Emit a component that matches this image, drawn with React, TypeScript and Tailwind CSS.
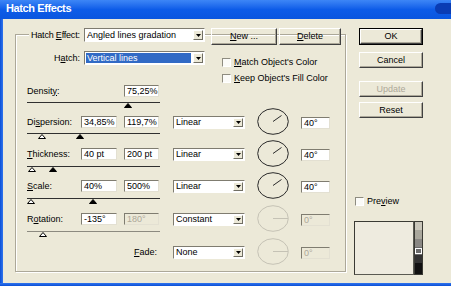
import React from 'react'

// ── small building blocks ──

function Key({ children }: { children: React.ReactNode }) {
  return <span className="underline decoration-1 underline-offset-[1px]">{children}</span>
}

function TextBox({
  value,
  className = '',
  disabled = false,
}: {
  value: string
  className?: string
  disabled?: boolean
}) {
  return (
    <div
      className={`flex h-[12px] shrink-0 items-center overflow-hidden border border-b-[#e3e0d2] border-l-[#7f7c70] border-r-[#e3e0d2] border-t-[#7f7c70] pl-[2px] text-[9px] leading-none ${
        disabled ? 'bg-[#ece9d8] text-[#aca899]' : 'bg-white text-black'
      } ${className}`}
    >
      {value}
    </div>
  )
}

function DropButton() {
  return (
    <div className="flex w-[10px] shrink-0 items-center justify-center border border-b-[#716f64] border-l-white border-r-[#716f64] border-t-white bg-[#ece9d8]">
      <svg width="5" height="3" viewBox="0 0 5 3">
        <polygon points="0,0 5,0 2.5,3" fill="#000" />
      </svg>
    </div>
  )
}

function Combo({
  value,
  className = '',
  selected = false,
}: {
  value: string
  className?: string
  selected?: boolean
}) {
  return (
    <div
      className={`flex shrink-0 items-stretch border border-b-white border-l-[#7f7c70] border-r-white border-t-[#7f7c70] bg-white p-[1px] text-[9px] leading-none ${className}`}
    >
      <div
        className={`mr-[2px] flex flex-1 items-center overflow-hidden whitespace-nowrap pl-[1px] ${
          selected ? 'bg-[#316ac5] text-white' : 'text-black'
        }`}
      >
        {value}
      </div>
      <DropButton />
    </div>
  )
}

function Button({
  children,
  className = '',
  disabled = false,
  isDefault = false,
}: {
  children: React.ReactNode
  className?: string
  disabled?: boolean
  isDefault?: boolean
}) {
  return (
    <div className={`shrink-0 ${isDefault ? 'border border-black' : ''} ${className}`}>
      <div
        className={`flex h-full w-full items-center justify-center border border-b-[#404040] border-l-white border-r-[#404040] border-t-white text-[9px] leading-none shadow-[inset_-1px_-1px_0_#aca899] ${
          disabled ? 'text-[#aca899]' : 'text-black'
        }`}
      >
        {children}
      </div>
    </div>
  )
}

function CheckBox() {
  return (
    <div className="h-[9px] w-[9px] shrink-0 border border-b-white border-l-[#8e8c80] border-r-white border-t-[#8e8c80] bg-[#fbfbf8]" />
  )
}

function Dial({ x2, y2, dim = false }: { x2: number; y2: number; dim?: boolean }) {
  const c = dim ? '#c5c2b5' : '#2a2a2a'
  return (
    <svg width="32" height="27" viewBox="0 0 32 27" className="-mb-[6px] -mt-[8px] shrink-0">
      <ellipse cx="16" cy="13.5" rx="15.3" ry="12.8" fill="none" stroke={c} strokeWidth="1" />
      <line x1="16" y1="13.5" x2={x2} y2={y2} stroke={c} strokeWidth="1" />
    </svg>
  )
}

type Thumb = { x: number; filled: boolean }

function Slider({ thumbs, dim = false, className = '' }: { thumbs: Thumb[]; dim?: boolean; className?: string }) {
  return (
    <div className={`relative h-[6px] w-[133px] ${className}`}>
      <div className={`h-px w-full ${dim ? 'bg-[#8c8a80]' : 'bg-[#303030]'}`} />
      {thumbs.map((t, i) => (
        <svg
          key={i}
          className="absolute top-[1px]"
          style={{ left: t.x - 4 }}
          width="8"
          height="5"
          viewBox="0 0 8 5"
        >
          <polygon
            points="0.5,4.5 4,0.5 7.5,4.5"
            fill={t.filled ? '#000' : '#fff'}
            stroke="#000"
            strokeWidth="1"
          />
        </svg>
      ))}
    </div>
  )
}

const SWATCHES = [
  { color: 'bg-[#c9c6ba]', h: 'h-[8px]', sel: false },
  { color: 'bg-[#a9a79c]', h: 'h-[9px]', sel: false },
  { color: 'bg-[#8a8884]', h: 'h-[8px]', sel: false },
  { color: 'bg-[#6b6b6b]', h: 'h-[8px]', sel: true },
  { color: 'bg-[#333333]', h: 'h-[8px]', sel: false },
  { color: 'bg-[#111111]', h: 'flex-1', sel: false },
]

export default function App() {
  return (
    <div className="flex h-[286px] w-[451px] flex-col overflow-hidden bg-[#ece9d8] font-['Liberation_Sans',Arial,sans-serif] text-black">
      {/* Title bar */}
      <div className="flex h-[19px] shrink-0 items-start bg-gradient-to-b from-[#3d86f6] via-[#0d5ce8] to-[#0a56df]">
        <span className="pl-[6px] pt-[3px] text-[11px] font-bold leading-none tracking-[-0.4px] text-white">
          Hatch Effects
        </span>
        <div className="ml-auto mt-[3px] h-[11px] w-[16px] rounded-l-full bg-[#0a3cb4]" />
      </div>

      <div className="flex flex-1">
        {/* left window frame */}
        <div className="w-[3px] shrink-0 bg-gradient-to-r from-[#0a4fd6] to-[#2f74ee]" />

        <div className="flex flex-1 items-start">
          {/* ── Group box ── */}
          <div className="ml-[12px] mt-[15px] h-[238px] w-[331px] shrink-0 border border-[#aca899] shadow-[inset_1px_1px_0_#fff,1px_1px_0_#fff]">
            <div className="flex flex-col pl-[11px]">
              {/* header on the frame line */}
              <div className="-mt-[7px] flex h-[17px] items-start">
                <div className="ml-[2px] flex h-[14px] w-[55px] shrink-0 items-center whitespace-nowrap bg-[#ece9d8] pl-[2px] text-[9px] leading-none tracking-[-0.2px]">
                  <span>
                    Hatch <Key>E</Key>ffect:
                  </span>
                </div>
                <Combo value="Angled lines gradation" className="h-[14px] w-[121px]" />
                <Button className="ml-[6px] h-[17px] w-[66px]">
                  <span>
                    <Key>N</Key>ew ...
                  </span>
                </Button>
                <Button className="ml-[2px] h-[17px] w-[62px]">
                  <span>
                    <Key>D</Key>elete
                  </span>
                </Button>
              </div>

              {/* hatch + options */}
              <div className="mt-[6px] flex h-[34px] items-start">
                <div className="flex h-[14px] w-[57px] items-center justify-end whitespace-nowrap pr-[4px] text-[9px] leading-none">
                  <span>
                    H<Key>a</Key>tch:
                  </span>
                </div>
                <Combo value="Vertical lines" selected className="h-[14px] w-[121px]" />
                <div className="ml-[17px] mt-[6px] flex flex-col gap-[6px]">
                  <div className="flex h-[10px] items-center">
                    <CheckBox />
                    <span className="ml-[3px] whitespace-nowrap text-[9px] leading-none">
                      <Key>M</Key>atch Object's Color
                    </span>
                  </div>
                  <div className="flex h-[10px] items-center">
                    <CheckBox />
                    <span className="ml-[3px] whitespace-nowrap text-[9px] leading-none">
                      <Key>K</Key>eep Object's Fill Color
                    </span>
                  </div>
                </div>
              </div>

              {/* Density */}
              <div className="flex h-[12px] items-center">
                <div className="w-[97px] text-[9px] leading-none">
                  <span>
                    Densit<Key>y</Key>:
                  </span>
                </div>
                <TextBox value="75,25%" className="w-[35px]" />
              </div>
              <Slider className="mt-[5px]" thumbs={[{ x: 101, filled: true }]} />

              {/* Dispersion */}
              <div className="mt-[8px] flex h-[13px] items-start">
                <div className="flex h-[12px] w-[54px] items-center text-[9px] leading-none">
                  <span>
                    Di<Key>s</Key>persion:
                  </span>
                </div>
                <TextBox value="34,85%" className="w-[36px]" />
                <TextBox value="119,7%" className="ml-[7px] w-[35px]" />
                <Combo value="Linear" className="ml-[14px] h-[13px] w-[72px]" />
                <div className="ml-[12px] flex">
                  <Dial x2={24.5} y2={7.5} />
                </div>
                <TextBox value="40°" className="ml-[12px] mt-[1px] h-[11px] w-[29px]" />
              </div>
              <Slider
                className="mt-[4px]"
                thumbs={[
                  { x: 15, filled: false },
                  { x: 52.5, filled: true },
                ]}
              />

              {/* Thickness */}
              <div className="mt-[9px] flex h-[13px] items-start">
                <div className="flex h-[12px] w-[54px] items-center text-[9px] leading-none">
                  <span>
                    <Key>T</Key>hickness:
                  </span>
                </div>
                <TextBox value="40 pt" className="w-[36px]" />
                <TextBox value="200 pt" className="ml-[7px] w-[35px]" />
                <Combo value="Linear" className="ml-[14px] h-[13px] w-[72px]" />
                <div className="ml-[12px] flex">
                  <Dial x2={24.5} y2={7.5} />
                </div>
                <TextBox value="40°" className="ml-[12px] mt-[1px] h-[11px] w-[29px]" />
              </div>
              <Slider
                className="mt-[5px]"
                thumbs={[
                  { x: 4.5, filled: false },
                  { x: 26, filled: true },
                ]}
              />

              {/* Scale */}
              <div className="mt-[8px] flex h-[13px] items-start">
                <div className="flex h-[12px] w-[54px] items-center text-[9px] leading-none">
                  <span>
                    <Key>S</Key>cale:
                  </span>
                </div>
                <TextBox value="40%" className="w-[36px]" />
                <TextBox value="500%" className="ml-[7px] w-[35px]" />
                <Combo value="Linear" className="ml-[14px] h-[13px] w-[72px]" />
                <div className="ml-[12px] flex">
                  <Dial x2={24.5} y2={7.5} />
                </div>
                <TextBox value="40°" className="ml-[12px] mt-[1px] h-[11px] w-[29px]" />
              </div>
              <Slider
                className="mt-[5px]"
                thumbs={[
                  { x: 4, filled: false },
                  { x: 66, filled: true },
                ]}
              />

              {/* Rotation */}
              <div className="mt-[9px] flex h-[13px] items-start">
                <div className="flex h-[12px] w-[54px] items-center text-[9px] leading-none">
                  <span>
                    R<Key>o</Key>tation:
                  </span>
                </div>
                <TextBox value="-135°" className="w-[36px]" />
                <TextBox value="180°" disabled className="ml-[7px] w-[35px]" />
                <Combo value="Constant" className="ml-[14px] h-[13px] w-[72px]" />
                <div className="ml-[12px] flex">
                  <Dial x2={31} y2={13.5} dim />
                </div>
                <TextBox value="0°" disabled className="ml-[12px] mt-[1px] h-[11px] w-[29px]" />
              </div>
              <Slider className="mt-[5px]" dim thumbs={[{ x: 16, filled: false }]} />

              {/* Fade */}
              <div className="mt-[9px] flex h-[13px] items-start">
                <div className="flex h-[13px] w-[146px] items-center justify-end pr-[16px] text-[9px] leading-none">
                  <span>
                    <Key>F</Key>ade:
                  </span>
                </div>
                <Combo value="None" className="h-[13px] w-[72px]" />
                <div className="ml-[12px] flex">
                  <Dial x2={31} y2={13.5} dim />
                </div>
                <TextBox value="0°" disabled className="ml-[12px] mt-[1px] h-[11px] w-[29px]" />
              </div>
            </div>
          </div>

          {/* ── Right column ── */}
          <div className="ml-[13px] mt-[9px] flex w-[64px] shrink-0 flex-col">
            <Button isDefault className="h-[17px] w-[64px]">
              OK
            </Button>
            <Button className="mt-[7px] h-[16px] w-[64px]">Cancel</Button>
            <Button disabled className="mt-[13px] h-[16px] w-[64px]">
              Update
            </Button>
            <Button className="mt-[5px] h-[16px] w-[64px]">Reset</Button>

            <div className="-ml-[4px] mt-[78px] flex h-[10px] items-center">
              <CheckBox />
              <span className="ml-[3px] text-[9px] leading-none">
                Pre<Key>v</Key>iew
              </span>
            </div>

            <div className="-ml-[5px] mt-[15px] flex h-[54px]">
              <div className="w-[79px] border border-b-[#5a5a52] border-l-[#3a3a34] border-r-[#5a5a52] border-t-[#3a3a34] bg-[#eeebdf]" />
              <div className="flex w-[11px] flex-col border border-[#3a3a34]">
                {SWATCHES.map((s, i) => (
                  <div key={i} className={`${s.h} ${s.color} flex items-center justify-center`}>
                    {s.sel && <div className="h-[6px] w-[7px] border border-white" />}
                  </div>
                ))}
              </div>
            </div>
          </div>
        </div>
      </div>

      {/* bottom window frame */}
      <div className="h-[3px] shrink-0 bg-gradient-to-b from-[#2f74ee] to-[#0a4fd6]" />
    </div>
  )
}
